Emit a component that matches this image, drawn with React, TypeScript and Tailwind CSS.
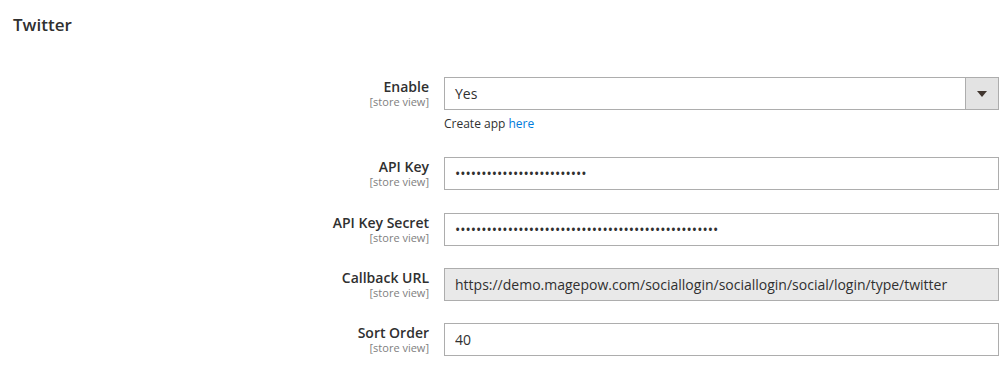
import React from "react";

const FONT = { fontFamily: '"Open Sans", "Liberation Sans", sans-serif' };

function Label({ title }: { title: string }) {
  return (
    <div className="w-[429px] shrink-0 text-right">
      <div className="text-[14px] font-semibold leading-[19px] text-[#303030]">{title}</div>
      <div className="text-[11px] leading-[12px] text-[#808080]">[store view]</div>
    </div>
  );
}

function TextField({ value, type = "text", disabled = false }: { value: string; type?: string; disabled?: boolean }) {
  return (
    <input
      readOnly
      type={type}
      value={value}
      style={FONT}
      className={
        "h-[33px] w-[555px] border border-[#adadad] px-[10px] text-[14px] text-[#303030] outline-none " +
        (disabled ? "bg-[#e9e9e9]" : "bg-white")
      }
    />
  );
}

export default function App() {
  return (
    <div style={FONT} className="h-[370px] w-[1002px] bg-white">
      <h2 className="pl-[13px] pt-[14px] text-[17px] font-semibold leading-[22px] text-[#303030]">Twitter</h2>

      <div className="mt-[41px] flex flex-col">
        {/* Enable */}
        <div className="flex items-start">
          <Label title="Enable" />
          <div className="ml-[15px]">
            <div className="flex h-[33px] w-[555px] border border-[#adadad] bg-white">
              <div className="flex flex-1 items-center px-[10px] text-[14px] text-[#303030]">Yes</div>
              <div className="flex w-[33px] items-center justify-center border-l border-[#adadad] bg-[#e3e3e3]">
                <div className="h-0 w-0 border-x-[5px] border-t-[6px] border-x-transparent border-t-[#41362f]" />
              </div>
            </div>
            <div className="mt-[5px] text-[12px] leading-[18px] text-[#303030]">
              Create app <span className="text-[#007bdb]">here</span>
            </div>
          </div>
        </div>

        <div className="mt-[24px] flex items-start">
          <Label title="API Key" />
          <div className="ml-[15px]">
            <TextField type="password" value="abcdefghijklmnopqrstuvwxy" />
          </div>
        </div>

        <div className="mt-[23px] flex items-start">
          <Label title="API Key Secret" />
          <div className="ml-[15px]">
            <TextField type="password" value="abcdefghijklmnopqrstuvwxyabcdefghijklmnopqrstuvwxy" />
          </div>
        </div>

        <div className="mt-[22px] flex items-start">
          <Label title="Callback URL" />
          <div className="ml-[15px]">
            <TextField disabled value="https://demo.magepow.com/sociallogin/sociallogin/social/login/type/twitter" />
          </div>
        </div>

        <div className="mt-[22px] flex items-start">
          <Label title="Sort Order" />
          <div className="ml-[15px]">
            <TextField value="40" />
          </div>
        </div>
      </div>
    </div>
  );
}
